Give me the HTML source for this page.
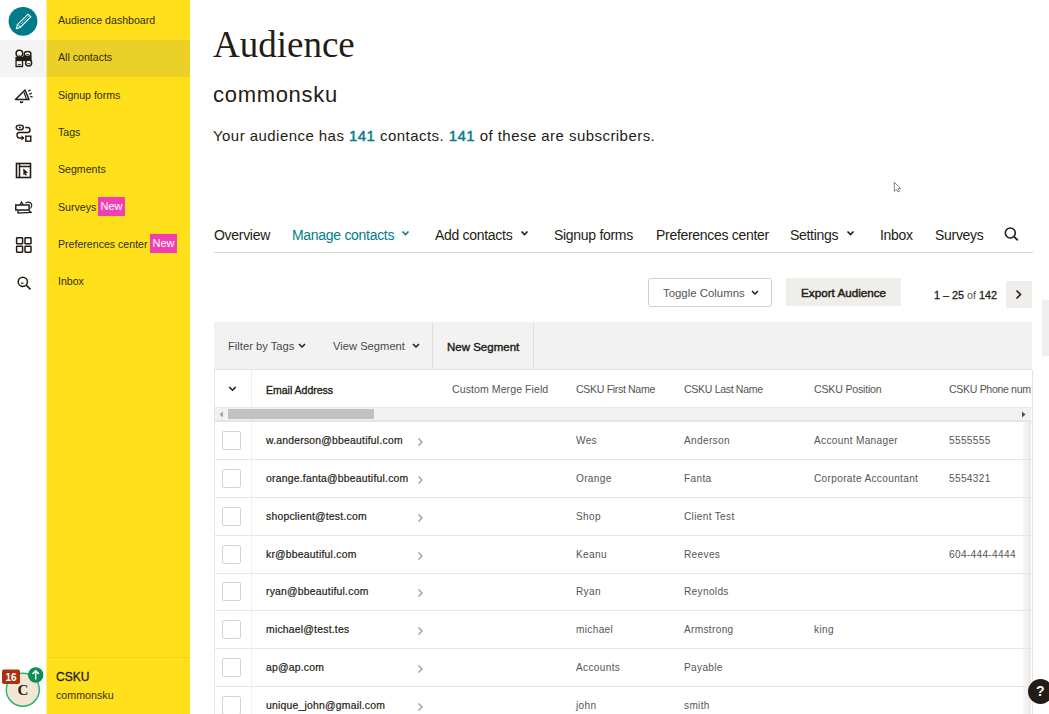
<!DOCTYPE html>
<html><head><meta charset="utf-8">
<style>
*{margin:0;padding:0;box-sizing:border-box}
html,body{width:1049px;height:714px;overflow:hidden;background:#fff;font-family:"Liberation Sans",sans-serif;color:#241c15}
.a{position:absolute;white-space:nowrap}
#rail{position:absolute;left:0;top:0;width:46px;height:714px;background:#fff}
#ynav{position:absolute;left:46px;top:0;width:144px;height:714px;background:#ffe01b}
.nv{position:absolute;left:12px;font-size:10.6px;color:#332d14;line-height:12px}
.badge{position:absolute;background:#f03fb3;color:#fff;font-size:11px;line-height:19px;height:19px;width:27px;text-align:center}
.tab{position:absolute;top:227px;font-size:14px;letter-spacing:-0.3px;line-height:16px;color:#241c15}
.chev{position:absolute}
.th{position:absolute;top:383px;font-size:10.6px;letter-spacing:-0.35px;color:#555;line-height:12px}
.row{position:absolute;left:214px;width:818px;height:38px;border-top:1px solid #e6e6e6}
.cb{position:absolute;left:8px;top:9px;width:19px;height:19px;border:1px solid #d4d4d4;border-radius:2px;background:#fff}
.em{position:absolute;left:52px;font-size:10.4px;letter-spacing:0.22px;color:#241c15;-webkit-text-stroke:0.2px #241c15;line-height:12px}
.ar{position:absolute;left:203px;top:16px}
.td{position:absolute;font-size:10.1px;letter-spacing:0.33px;color:#555;line-height:12px}
</style></head><body>

<div id="rail"></div>
<div class="a" style="left:0;top:40px;width:46px;height:37px;background:#f4f4f4"></div>
<div id="ynav"></div>
<div class="a" style="left:46px;top:40px;width:144px;height:37px;background:#ebd027"></div>
<div class="a" style="left:46px;top:0;width:1px;height:714px;background:#fcec85"></div>

<!-- nav texts -->
<div class="a nv" style="left:58px;top:14px">Audience dashboard</div>
<div class="a nv" style="left:58px;top:51px">All contacts</div>
<div class="a nv" style="left:58px;top:89px">Signup forms</div>
<div class="a nv" style="left:58px;top:126px">Tags</div>
<div class="a nv" style="left:58px;top:163px">Segments</div>
<div class="a nv" style="left:58px;top:201px">Surveys</div>
<div class="a badge" style="left:98px;top:197px">New</div>
<div class="a nv" style="left:58px;top:238px">Preferences center</div>
<div class="a badge" style="left:150px;top:234px">New</div>
<div class="a nv" style="left:58px;top:275px">Inbox</div>

<!-- bottom account -->
<div class="a" style="left:48px;top:657px;width:142px;height:1px;background:#efd21a"></div>
<div class="a" style="left:56px;top:670px;font-size:12px;line-height:14px;color:#241c15;-webkit-text-stroke:0.3px #241c15">CSKU</div>
<div class="a" style="left:56px;top:689px;font-size:10.7px;line-height:12px;color:#3a3420">commonsku</div>

<!-- rail icons -->
<svg class="a" style="left:0;top:0" width="46" height="300" viewBox="0 0 46 300">
  <circle cx="23" cy="21.3" r="14.4" fill="#007c89"/>
  <g transform="translate(16.3 28.6) rotate(-45)" fill="none" stroke="#fff" stroke-linejoin="round">
    <path d="M0 0 L3.6 -2 H18.6 V2 H3.6 Z" stroke-width="1.1"/>
    <path d="M4.5 0 H17.5" stroke-width="0.9" stroke-dasharray="1 1"/>
    <path d="M3.6 -2 V2" stroke-width="0.8"/>
  </g>
  <g stroke="#241c15" fill="none" stroke-width="1.6">
    <!-- all contacts -->
    <g>
      <path d="M15.4 57 H23.2 V67.2 H15.4 Z" fill="#241c15" stroke="none"/>
      <path d="M23 55.5 H31.6 V61 H23 Z" fill="#241c15" stroke="none"/>
      <circle cx="19.4" cy="53.6" r="3.3" fill="#fff" stroke-width="1.5"/>
      <ellipse cx="27.6" cy="54" rx="3.3" ry="2.5" fill="#fff" stroke-width="1.5"/>
      <circle cx="28.6" cy="63.1" r="3" fill="#fff" stroke-width="1.5"/>
      <rect x="16.7" y="61.2" width="5.1" height="4.5" fill="#fff" stroke="none"/>
      <path d="M17.8 64.6 H20.8" stroke-width="0.9"/>
      <path d="M18.4 55 Q19.4 56 20.4 55" stroke-width="0.9"/>
      <path d="M26.3 54.6 H29" stroke-width="0.9"/>
      <path d="M27.3 63.7 H30" stroke-width="0.9"/>
    </g>
    <!-- megaphone -->
    <path d="M15.5 99.5 L25 90 L29 99.5 Z" stroke-width="1.5" stroke-linejoin="round"/>
    <path d="M24 92.5 L26.5 99" stroke-width="1.2"/>
    <path d="M20 101.5 Q21.5 103.5 23 101.5" stroke-width="1.4"/>
    <path d="M28.1 91.2 L30.5 89.9 M29.3 94.4 L31.8 93 M30.3 96.5 L32.6 96.8" stroke-width="1.3"/>
    <!-- tags flow -->
    <ellipse cx="19.8" cy="127.5" rx="3.6" ry="2.4" stroke-width="1.4"/>
    <circle cx="19.8" cy="127.5" r="0.9" fill="#241c15" stroke="none"/>
    <path d="M25.2 127.5 H27.5 Q30 127.5 30 130 Q30 132.5 27.5 132.5 H19.5 Q17 132.5 17 135 Q17 138 19.5 138 H22.5" stroke-width="1.4"/>
    <path d="M21.5 136 L24 138 L21.5 140" fill="#241c15" stroke-width="1"/>
    <rect x="25.8" y="136.2" width="5" height="5" stroke-width="1.4"/>
    <!-- segments -->
    <rect x="16.5" y="163.5" width="14" height="14" stroke-width="1.6"/>
    <path d="M19.5 163.5 V177.5 M19.5 166.5 H30.5" stroke-width="1.5"/>
    <path d="M23.5 169 L27.5 172.5 L25.5 173 L26.5 175 L25.5 175.2 L24.5 173.5 L23.8 174.8 Z" fill="#241c15" stroke-width="0.6"/>
    <!-- surveys -->
    <rect x="15.8" y="205" width="13.3" height="5" stroke-width="1.5"/>
    <path d="M20 205 L21.5 202 L23.5 205" stroke-width="1.3"/>
    <path d="M17.5 213 L18.5 210.5 M17.5 213.2 L31 212.5 L29 210.5" stroke-width="1.3"/>
    <path d="M25.5 203 Q29.5 201 31.5 204 Q32.5 206 30.5 208.5" stroke-width="1.2"/>
    <!-- grid -->
    <rect x="16.6" y="237.8" width="6" height="6" rx="0.6" stroke-width="1.5"/>
    <rect x="25" y="237.8" width="6" height="6" rx="0.6" stroke-width="1.5"/>
    <rect x="16.6" y="246.2" width="6" height="6" rx="0.6" stroke-width="1.5"/>
    <rect x="25" y="246.2" width="6" height="6" rx="0.6" stroke-width="1.5"/>
    <!-- search -->
    <circle cx="22.8" cy="281.8" r="4.6" stroke-width="1.5"/>
    <path d="M26.2 285.2 L30.5 289.3" stroke-width="1.6"/>
    <path d="M21 283.2 H23.5" stroke-width="1.2"/>
  </g>
</svg>

<!-- avatar -->
<svg class="a" style="left:0;top:660px" width="46" height="54" viewBox="0 660 46 54">
  <circle cx="22.8" cy="689.7" r="16.5" fill="#f3e7d3" stroke="#2cb577" stroke-width="1.5"/>
  <text x="22.8" y="695" text-anchor="middle" font-family="Liberation Serif" font-size="15" font-weight="bold" fill="#241c15">C</text>
  <rect x="2" y="669.5" width="18" height="14.5" rx="2" fill="#a83210"/>
  <text x="11" y="681" text-anchor="middle" font-family="Liberation Sans" font-size="10" font-weight="bold" fill="#fff">16</text>
  <circle cx="35.7" cy="675" r="7.7" fill="#108c57"/>
  <path d="M35.7 679.5 V671 M32.5 674 L35.7 670.8 L38.9 674" stroke="#fff" stroke-width="1.5" fill="none"/>
</svg>

<!-- header -->
<div class="a" style="left:213px;top:24px;font-family:'Liberation Serif',serif;font-size:37px;line-height:42px;color:#241c15">Audience</div>
<div class="a" style="left:213px;top:82px;font-size:22px;line-height:26px;letter-spacing:0.7px;color:#241c15">commonsku</div>
<div class="a" style="left:213px;top:127px;font-size:15px;letter-spacing:0.45px;line-height:18px;color:#241c15">Your audience has <span style="color:#007c89;-webkit-text-stroke:0.45px #007c89">141</span> contacts. <span style="color:#007c89;-webkit-text-stroke:0.45px #007c89">141</span> of these are subscribers.</div>

<!-- cursor -->
<svg class="a" style="left:893px;top:181px" width="10" height="13" viewBox="0 0 10 13">
  <path d="M1.3 1.3 V10.3 L3.5 8.5 L5 11 L6.5 10.2 L5.2 7.6 L7.6 7.4 Z" fill="#fff" stroke="#4a505a" stroke-width="0.7"/>
</svg>

<!-- tabs -->
<div class="a tab" style="left:214px">Overview</div>
<div class="a tab" style="left:292px;color:#007c89">Manage contacts</div>
<svg class="a" style="left:401px;top:230px" width="9" height="7"><path d="M1.5 1.5 L4.5 4.5 L7.5 1.5" stroke="#007c89" stroke-width="1.6" fill="none"/></svg>
<div class="a tab" style="left:435px">Add contacts</div>
<svg class="a" style="left:520px;top:230px" width="9" height="7"><path d="M1.5 1.5 L4.5 4.5 L7.5 1.5" stroke="#241c15" stroke-width="1.6" fill="none"/></svg>
<div class="a tab" style="left:554px">Signup forms</div>
<div class="a tab" style="left:656px">Preferences center</div>
<div class="a tab" style="left:790px">Settings</div>
<svg class="a" style="left:846px;top:230px" width="9" height="7"><path d="M1.5 1.5 L4.5 4.5 L7.5 1.5" stroke="#241c15" stroke-width="1.6" fill="none"/></svg>
<div class="a tab" style="left:880px">Inbox</div>
<div class="a tab" style="left:935px">Surveys</div>
<svg class="a" style="left:1003px;top:226px" width="17" height="16" viewBox="0 0 17 16"><circle cx="7.3" cy="7" r="5" stroke="#241c15" stroke-width="1.6" fill="none"/><path d="M11 10.6 L14.8 14.3" stroke="#241c15" stroke-width="1.7"/></svg>
<div class="a" style="left:214px;top:252px;width:819px;height:1px;background:#d6d6d6"></div>

<!-- toolbar buttons -->
<div class="a" style="left:648px;top:278px;width:124px;height:29px;border:1px solid #cfcfcf;border-radius:3px;background:#fff"></div>
<div class="a" style="left:663px;top:287px;font-size:11.4px;line-height:13px;color:#555">Toggle Columns</div>
<svg class="a" style="left:751px;top:290px" width="8" height="6"><path d="M1 1 L4 4 L7 1" stroke="#241c15" stroke-width="1.5" fill="none"/></svg>
<div class="a" style="left:786px;top:278px;width:115px;height:28px;background:#efeeea"></div>
<div class="a" style="left:801px;top:286px;font-size:11.7px;line-height:13px;color:#241c15;-webkit-text-stroke:0.45px #241c15">Export Audience</div>
<div class="a" style="left:934px;top:289px;font-size:10.8px;line-height:13px;color:#241c15;-webkit-text-stroke:0.3px #241c15">1 – 25 <span style="color:#555;-webkit-text-stroke:0">of</span> 142</div>
<div class="a" style="left:1006px;top:281px;width:26px;height:27px;background:#efeeea"></div>
<svg class="a" style="left:1015px;top:289px" width="8" height="11"><path d="M1.5 1.5 L5.5 5.5 L1.5 9.5" stroke="#241c15" stroke-width="1.6" fill="none"/></svg>
<div class="a" style="left:1042px;top:300px;width:7px;height:56px;background:#efefef"></div>

<!-- filter bar -->
<div class="a" style="left:214px;top:322px;width:818px;height:48px;background:#f2f2f2;border-bottom:1px solid #e2e2e2"></div>
<div class="a" style="left:432px;top:322px;width:1px;height:47px;background:#e0e0e0"></div>
<div class="a" style="left:533px;top:322px;width:1px;height:47px;background:#e0e0e0"></div>
<div class="a" style="left:228px;top:340px;font-size:11.2px;line-height:13px;color:#4a4a4a">Filter by Tags</div>
<svg class="a" style="left:298px;top:343px" width="8" height="6"><path d="M1 1 L4 4 L7 1" stroke="#241c15" stroke-width="1.5" fill="none"/></svg>
<div class="a" style="left:333px;top:340px;font-size:11.2px;line-height:13px;color:#4a4a4a">View Segment</div>
<svg class="a" style="left:412px;top:343px" width="8" height="6"><path d="M1 1 L4 4 L7 1" stroke="#241c15" stroke-width="1.5" fill="none"/></svg>
<div class="a" style="left:447px;top:341px;font-size:11.5px;line-height:13px;color:#241c15;-webkit-text-stroke:0.4px #241c15">New Segment</div>

<!-- table -->
<div class="a" style="left:214px;top:370px;width:1px;height:344px;background:#e6e6e6"></div>
<div class="a" style="left:1032px;top:370px;width:1px;height:344px;background:#e4e4e4"></div>
<div class="a" style="left:1023px;top:421px;width:8px;height:293px;background:linear-gradient(to right,rgba(0,0,0,0.03),rgba(0,0,0,0.09))"></div>
<div class="a" style="left:251px;top:370px;width:1px;height:37px;background:#eeeeee"></div>
<svg class="a" style="left:228px;top:386px" width="9" height="6"><path d="M1.2 1 L4.5 4.2 L7.8 1" stroke="#241c15" stroke-width="1.6" fill="none"/></svg>
<div class="a" style="left:266px;top:384px;font-size:10.5px;line-height:12px;color:#241c15;-webkit-text-stroke:0.35px #241c15">Email Address</div>
<div class="a th" style="left:452px;letter-spacing:0.05px">Custom Merge Field</div>
<div class="a th" style="left:576px">CSKU First Name</div>
<div class="a th" style="left:684px">CSKU Last Name</div>
<div class="a th" style="left:814px;letter-spacing:-0.2px">CSKU Position</div>
<div class="a th" style="left:949px;width:82px;overflow:hidden">CSKU Phone number</div>

<!-- scrollbar -->
<div class="a" style="left:215px;top:407px;width:816px;height:14px;background:#f1f1f1;border-top:1px solid #e8e8e8;border-bottom:1px solid #e4e4e4"></div>
<div class="a" style="left:228px;top:409px;width:146px;height:10px;background:#c1c1c1"></div>
<svg class="a" style="left:218px;top:411px" width="6" height="7"><path d="M5 0.5 L1.5 3.5 L5 6.5 Z" fill="#a3a3a3"/></svg>
<svg class="a" style="left:1021px;top:411px" width="6" height="7"><path d="M1 0.5 L4.5 3.5 L1 6.5 Z" fill="#505050"/></svg>

<div id="rows">
<div class="row" style="top:421px;height:38px"><div class="cb" style="top:9px"></div><div class="a em" style="top:13px">w.anderson@bbeautiful.com</div><svg class="a ar" style="top:15px" width="7" height="10"><path d="M1.5 1.5 L5 5 L1.5 8.5" stroke="#999" stroke-width="1.3" fill="none"/></svg><div class="a" style="left:37px;top:0;width:1px;height:38px;background:#f0f0f0"></div><div class="a td" style="left:362px;top:13px">Wes</div><div class="a td" style="left:470px;top:13px">Anderson</div><div class="a td" style="left:600px;top:13px">Account Manager</div><div class="a td" style="left:735px;top:13px">5555555</div></div>
<div class="row" style="top:459px;height:38px"><div class="cb" style="top:9px"></div><div class="a em" style="top:13px">orange.fanta@bbeautiful.com</div><svg class="a ar" style="top:15px" width="7" height="10"><path d="M1.5 1.5 L5 5 L1.5 8.5" stroke="#999" stroke-width="1.3" fill="none"/></svg><div class="a" style="left:37px;top:0;width:1px;height:38px;background:#f0f0f0"></div><div class="a td" style="left:362px;top:13px">Orange</div><div class="a td" style="left:470px;top:13px">Fanta</div><div class="a td" style="left:600px;top:13px">Corporate Accountant</div><div class="a td" style="left:735px;top:13px">5554321</div></div>
<div class="row" style="top:497px;height:38px"><div class="cb" style="top:9px"></div><div class="a em" style="top:13px">shopclient@test.com</div><svg class="a ar" style="top:15px" width="7" height="10"><path d="M1.5 1.5 L5 5 L1.5 8.5" stroke="#999" stroke-width="1.3" fill="none"/></svg><div class="a" style="left:37px;top:0;width:1px;height:38px;background:#f0f0f0"></div><div class="a td" style="left:362px;top:13px">Shop</div><div class="a td" style="left:470px;top:13px">Client Test</div></div>
<div class="row" style="top:535px;height:38px"><div class="cb" style="top:9px"></div><div class="a em" style="top:13px">kr@bbeautiful.com</div><svg class="a ar" style="top:15px" width="7" height="10"><path d="M1.5 1.5 L5 5 L1.5 8.5" stroke="#999" stroke-width="1.3" fill="none"/></svg><div class="a" style="left:37px;top:0;width:1px;height:38px;background:#f0f0f0"></div><div class="a td" style="left:362px;top:13px">Keanu</div><div class="a td" style="left:470px;top:13px">Reeves</div><div class="a td" style="left:735px;top:13px">604-444-4444</div></div>
<div class="row" style="top:573px;height:37px"><div class="cb" style="top:8px"></div><div class="a em" style="top:12px">ryan@bbeautiful.com</div><svg class="a ar" style="top:14px" width="7" height="10"><path d="M1.5 1.5 L5 5 L1.5 8.5" stroke="#999" stroke-width="1.3" fill="none"/></svg><div class="a" style="left:37px;top:0;width:1px;height:37px;background:#f0f0f0"></div><div class="a td" style="left:362px;top:12px">Ryan</div><div class="a td" style="left:470px;top:12px">Reynolds</div></div>
<div class="row" style="top:610px;height:38px"><div class="cb" style="top:9px"></div><div class="a em" style="top:13px">michael@test.tes</div><svg class="a ar" style="top:15px" width="7" height="10"><path d="M1.5 1.5 L5 5 L1.5 8.5" stroke="#999" stroke-width="1.3" fill="none"/></svg><div class="a" style="left:37px;top:0;width:1px;height:38px;background:#f0f0f0"></div><div class="a td" style="left:362px;top:13px">michael</div><div class="a td" style="left:470px;top:13px">Armstrong</div><div class="a td" style="left:600px;top:13px">king</div></div>
<div class="row" style="top:648px;height:38px"><div class="cb" style="top:9px"></div><div class="a em" style="top:13px">ap@ap.com</div><svg class="a ar" style="top:15px" width="7" height="10"><path d="M1.5 1.5 L5 5 L1.5 8.5" stroke="#999" stroke-width="1.3" fill="none"/></svg><div class="a" style="left:37px;top:0;width:1px;height:38px;background:#f0f0f0"></div><div class="a td" style="left:362px;top:13px">Accounts</div><div class="a td" style="left:470px;top:13px">Payable</div></div>
<div class="row" style="top:686px;height:38px"><div class="cb" style="top:9px"></div><div class="a em" style="top:13px">unique_john@gmail.com</div><svg class="a ar" style="top:15px" width="7" height="10"><path d="M1.5 1.5 L5 5 L1.5 8.5" stroke="#999" stroke-width="1.3" fill="none"/></svg><div class="a" style="left:37px;top:0;width:1px;height:38px;background:#f0f0f0"></div><div class="a td" style="left:362px;top:13px">john</div><div class="a td" style="left:470px;top:13px">smith</div></div>
</div>
<div class="a" style="left:1028px;top:679px;width:25px;height:25px;border-radius:50%;background:#241c15;color:#fff;font-weight:bold;font-size:14px;line-height:25px;text-indent:8px">?</div>
</body></html>
